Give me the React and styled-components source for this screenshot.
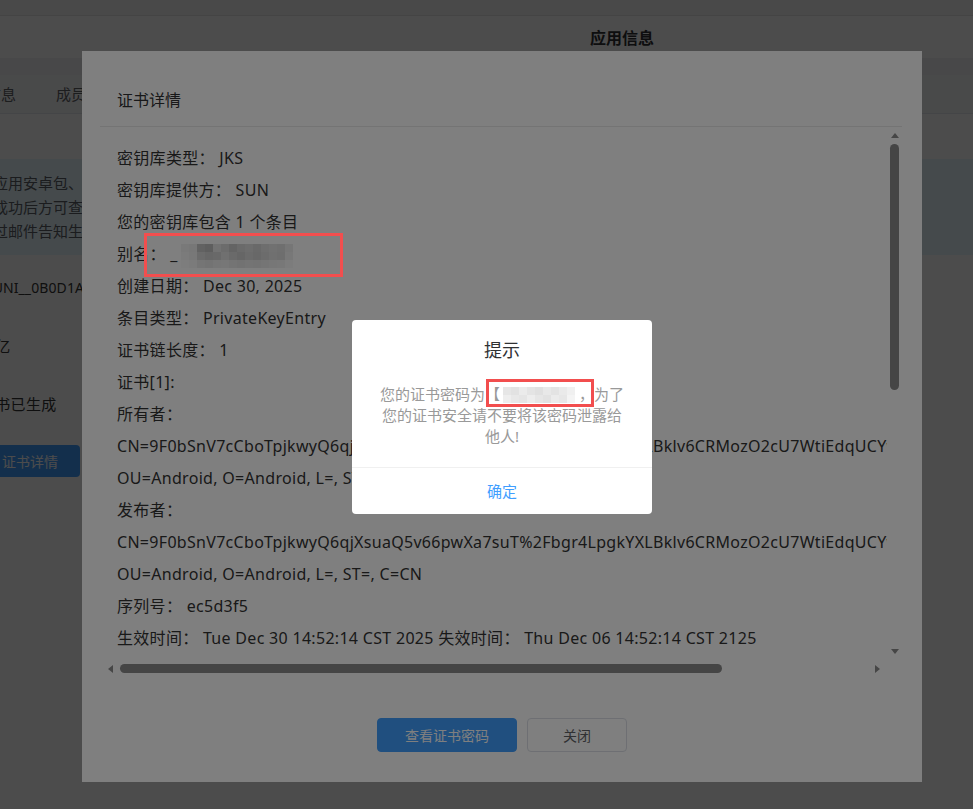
import React from 'react'
import styled, { createGlobalStyle, css } from 'styled-components'

const GlobalStyle = createGlobalStyle`
  html, body {
    margin: 0;
    padding: 0;
    height: 100%;
    overflow: hidden;
  }
  body {
    font-family: "Noto Sans", "Noto Sans CJK SC", sans-serif;
    background: #fff;
  }
  * {
    box-sizing: border-box;
  }
`;

/* ---------- page behind the dialogs (scrolled a little to the right) ---------- */

const Page = styled.div`
    margin-left: -200px;
    width: calc(100% + 200px);
    min-height: 100vh;
    background: #fff;
    color: #606266;
`;

const TopBar = styled.div`
    height: 16px;
    background: #f6f6f6;
    border-bottom: 1px solid #e3e3e3;
`;

const Header = styled.div`
    height: 42px;
    display: flex;
    align-items: center;
    padding-left: 790px;
    font-size: 16px;
    font-weight: bold;
    color: #303133;
`;

const Band = styled.div`
    height: 17px;
    background: #f1f2f4;
`;

const Tabs = styled.div`
    height: 39px;
    display: flex;
    padding-left: 136px;
    background: #f6f7f9;
    border-bottom: 1px solid #e4e7ed;
`;

const Tab = styled.div`
    padding: 0 20px;
    line-height: 38px;
    font-size: 15px;
    color: #606266;
`;

const InfoBox = styled.div`
    margin-top: 45px;
    padding: 12px 0 12px 193px;
    background: #e6f7ff;
    font-size: 15px;
    line-height: 24px;
    color: #5a6066;
    white-space: nowrap;
`;

const Form = styled.div`
    padding-top: 3px;
`;

const Row = styled.div`
    display: grid;
    grid-template-columns: 180px 1fr;
    align-items: center;
    height: 58px;
    font-size: 15px;
    color: #333;
`;

const Label = styled.div`
    text-align: right;
    padding-right: 12px;
    color: #606266;
`;

const Value = styled.div`
    white-space: nowrap;
    font-size: ${p => p.$size || 15}px;
    letter-spacing: ${p => p.$spacing ?? 0.3}px;
`;

const PageButton = styled.button`
    justify-self: start;
    height: 32px;
    padding: 0 22px;
    border: none;
    border-radius: 4px;
    background: #409eff;
    color: #fff;
    font-family: inherit;
    font-size: 14px;
`;

/* ---------- masks ---------- */

const Mask = styled.div`
    position: fixed;
    inset: 0;
    background: rgba(0, 0, 0, ${p => p.$alpha});
    z-index: ${p => p.$z};
`;

/* ---------- certificate dialog ---------- */

const DialogLayer = styled.div`
    position: fixed;
    inset: 0;
    z-index: 11;
    display: flex;
    padding: 51px 51px 27px 82px;
`;

const Dialog = styled.div`
    flex: 1;
    min-width: 0;
    min-height: 0;
    display: flex;
    flex-direction: column;
    background: #fff;
    color: #333;
`;

const DialogHeader = styled.div`
    margin: 0 20px 0 18px;
    padding: 37px 17px 14px;
    border-bottom: 1px solid #e8e8e8;
    font-size: 16px;
    line-height: 24px;
    color: #303133;
`;

const DialogBody = styled.div`
    flex: 1;
    min-height: 0;
    margin: 0 20px 0 18px;
    display: grid;
    grid-template-columns: 1fr 15px;
    grid-template-rows: 1fr 15px;
`;

const Viewport = styled.div`
    overflow: hidden;
    min-width: 0;
    min-height: 0;
`;

const Content = styled.div`
    padding: 15px 17px 22px;
    font-size: 16px;
    letter-spacing: 0.3px;
`;

const Line = styled.div`
    height: 32px;
    line-height: 32px;
    white-space: nowrap;
`;

/* scrollbars (drawn, the page itself is photographed without native ones) */

const ScrollBar = styled.div`
    display: flex;
    flex-direction: ${p => p.$vertical ? 'column' : 'row'};
    background: #fff;
`;

const ScrollButton = styled.div`
    flex: 0 0 15px;
    display: flex;
    ${p => p.$vertical ? css`
        justify-content: center;
        padding-top: ${p.$offset}px;
    ` : css`
        align-items: center;
        padding-left: ${p.$offset}px;
    `}
`;

const Arrow = styled.span`
    width: 0;
    height: 0;
    ${p => p.$dir === 'up' && css`
        border-left: 4.5px solid transparent;
        border-right: 4.5px solid transparent;
        border-bottom: 5px solid #8c8c8c;
    `}
    ${p => p.$dir === 'down' && css`
        border-left: 4.5px solid transparent;
        border-right: 4.5px solid transparent;
        border-top: 5px solid #8c8c8c;
    `}
    ${p => p.$dir === 'left' && css`
        border-top: 4.5px solid transparent;
        border-bottom: 4.5px solid transparent;
        border-right: 5px solid #8c8c8c;
    `}
    ${p => p.$dir === 'right' && css`
        border-top: 4.5px solid transparent;
        border-bottom: 4.5px solid transparent;
        border-left: 5px solid #8c8c8c;
    `}
`;

const Track = styled.div`
    flex: 1;
    display: flex;
    ${p => p.$vertical ? css`
        padding: 2px 3px 0;
    ` : css`
        padding: 3px 0 0 5px;
    `}
`;

const Thumb = styled.div`
    background: #8a8a8a;
    border-radius: 5px;
    ${p => p.$vertical ? css`
        width: 9px;
        height: ${p.$size}px;
    ` : css`
        height: 9px;
        width: ${p.$size}px;
    `}
`;

const Corner = styled.div`
    background: #fff;
`;

/* pixelated redaction blocks */
const Mosaic = styled.span`
    display: inline-grid;
    grid-template-columns: repeat(${p => p.$cols}, ${p => p.$cell}px);
    grid-auto-rows: ${p => p.$cell}px;
    vertical-align: middle;
    margin: ${p => p.$margin || '0'};
    filter: blur(0.6px);
`;

const Cell = styled.span`
    background: ${p => p.$c};
`;

const DialogFooter = styled.div`
    height: 106px;
    padding-top: 42px;
    display: flex;
    justify-content: center;
    gap: 10px;
`;

const FooterButton = styled.button`
    width: ${p => p.$w}px;
    height: 34px;
    border-radius: 4px;
    font-family: inherit;
    font-size: 14px;
    ${p => p.$primary ? css`
        background: #409eff;
        border: 1px solid #409eff;
        color: #fff;
    ` : css`
        background: #fff;
        border: 1px solid #dcdfe6;
        color: #606266;
    `}
`;

/* ---------- prompt box ---------- */

const AlertLayer = styled.div`
    position: fixed;
    inset: 0;
    z-index: 21;
    display: flex;
    align-items: center;
    justify-content: center;
    padding: 51px 51px 27px 82px;
`;

const Alert = styled.div`
    width: 300px;
    background: #fff;
    border-radius: 4px;
    text-align: center;
`;

const AlertTitle = styled.div`
    padding-top: 18px;
    font-size: 18px;
    line-height: 24px;
    color: #303133;
`;

const AlertMessage = styled.div`
    padding: 22px 25px 20px;
    font-size: 15px;
    line-height: 21px;
    color: #999;
`;

const Secret = styled.span`
    position: relative;

    &::after {
        content: '';
        position: absolute;
        left: 1px;
        right: 0;
        top: -5px;
        bottom: -3px;
        border: 3px solid #f24e4e;
    }
`;

const AlertFooter = styled.div`
    height: 47px;
    display: flex;
    align-items: center;
    justify-content: center;
    border-top: 1px solid #f0f0f0;
    font-size: 15px;
    color: #409eff;
`;

/* red frame drawn over the alias in the screenshot */
const Highlight = styled.div`
    position: fixed;
    left: 144px;
    top: 233px;
    width: 199px;
    height: 44px;
    border: 3px solid #f24e4e;
    z-index: 30;
    pointer-events: none;
`;

const CN = 'CN=9F0bSnV7cCboTpjkwyQ6qjXsuaQ5v66pwXa7suT%2Fbgr4LpgkYXLBklv6CRMozO2cU7WtiEdqUCYw%3D%3D';

const lines = [
    '密钥库类型： JKS',
    '密钥库提供方： SUN',
    '您的密钥库包含 1 个条目',
    'ALIAS',
    '创建日期： Dec 30, 2025',
    '条目类型： PrivateKeyEntry',
    '证书链长度： 1',
    '证书[1]:',
    '所有者：',
    CN,
    'OU=Android, O=Android, L=, ST=, C=CN',
    '发布者：',
    CN,
    'OU=Android, O=Android, L=, ST=, C=CN',
    '序列号： ec5d3f5',
    '生效时间： Tue Dec 30 14:52:14 CST 2025 失效时间： Thu Dec 06 14:52:14 CST 2125',
    '证书指纹：',
    'MD5: 5B:2E:91:0C:7A:44:D8:13:6F:A2:0E:9C:31:B7:58:E4',
    'SHA1: 8C:11:3F:A9:62:D0:7B:45:E2:9A:0C:56:1D:F8:34:B2:77:C5:09:AE',
    'SHA256: 4E:90:2A:C7:13:5B:F6:88:0D:A1:6E:3C:92:47:B5:D0:1F:E8:63:2B',
    '签名算法名称： SHA256withRSA',
    '主体公共密钥算法： 2048 位 RSA 密钥',
    '版本： 3',
];

// redaction shades, one row per string
const aliasBlocks = [
    '#f2f2f2 #eeeeee #c4c4c4 #bcbcbc #e4e4e4 #d8d8d8 #c8c8c8 #d4d4d4 #dadada #d2d2d2 #dcdcdc #e2e2e2 #dedede #ececec',
    '#f6f6f6 #f0f0f0 #d6d6d6 #cfcfcf #d2d2d2 #e0e0e0 #d4d4d4 #cccccc #d6d6d6 #d0d0d0 #d8d8d8 #e0e0e0 #dcdcdc #f0f0f0',
    '#fafafa #f6f6f6 #eaeaea #e6e6e6 #ececec #eeeeee #e8e8e8 #e4e4e4 #e8e8e8 #e6e6e6 #eaeaea #eeeeee #f0f0f0 #f8f8f8',
].map(r => r.split(' '));

const passwordBlocks = [
    '#e6e6e6 #e2e2e2 #ebebeb #e4e4e4 #e0e0e0 #e8e8e8 #e3e3e3 #eaeaea #f0f0f0',
    '#eeeeee #e8e8e8 #e5e5e5 #ededed #e6e6e6 #e2e2e2 #ebebeb #e7e7e7 #f4f4f4',
].map(r => r.split(' '));

const Redacted = ({ rows, cell, margin }) => (
    <Mosaic $cols={rows[0].length} $cell={cell} $margin={margin}>
        {rows.flat().map((c, i) => <Cell key={i} $c={c} />)}
    </Mosaic>
);

function App() {
    return (
        <>
            <GlobalStyle />
            <Page>
                <TopBar />
                <Header>应用信息</Header>
                <Band />
                <Tabs>
                    <Tab>基本信息</Tab>
                    <Tab>成员管理</Tab>
                    <Tab>安卓证书</Tab>
                </Tabs>
                <InfoBox>
                    <div>应用安卓包、苹果包打包时需要使用证书，请先生成证书</div>
                    <div>成功后方可查看证书详情及证书密码，证书信息请妥善保管</div>
                    <div>过邮件告知生成结果，如有问题请联系管理员</div>
                </InfoBox>
                <Form>
                    <Row>
                        <Label>AppID：</Label>
                        <Value $size={14} $spacing={0.1}>__UNI__0B0D1A5</Value>
                    </Row>
                    <Row>
                        <Label>申请人：</Label>
                        <Value>王亿</Value>
                    </Row>
                    <Row>
                        <Label>证书状态：</Label>
                        <Value>证书已生成</Value>
                    </Row>
                    <Row>
                        <Label>操作：</Label>
                        <PageButton>证书详情</PageButton>
                    </Row>
                </Form>
            </Page>

            <Mask $alpha={0.4} $z={10} />

            <DialogLayer>
                <Dialog>
                    <DialogHeader>证书详情</DialogHeader>
                    <DialogBody>
                        <Viewport>
                            <Content>
                                {lines.map((text, index) => (
                                    <Line key={index}>
                                        {text === 'ALIAS'
                                            ? <>别名： _<Redacted rows={aliasBlocks} cell={8} margin="0 0 0 3px" /></>
                                            : text}
                                    </Line>
                                ))}
                            </Content>
                        </Viewport>
                        <ScrollBar $vertical>
                            <ScrollButton $vertical $offset={6}><Arrow $dir="up" /></ScrollButton>
                            <Track $vertical><Thumb $vertical $size={246} /></Track>
                            <ScrollButton $vertical $offset={3}><Arrow $dir="down" /></ScrollButton>
                        </ScrollBar>
                        <ScrollBar>
                            <ScrollButton $offset={8}><Arrow $dir="left" /></ScrollButton>
                            <Track><Thumb $size={602} /></Track>
                            <ScrollButton $offset={3}><Arrow $dir="right" /></ScrollButton>
                        </ScrollBar>
                        <Corner />
                    </DialogBody>
                    <DialogFooter>
                        <FooterButton $primary $w={140}>查看证书密码</FooterButton>
                        <FooterButton $w={100}>关闭</FooterButton>
                    </DialogFooter>
                </Dialog>
            </DialogLayer>

            <Mask $alpha={0.5} $z={20} />

            <AlertLayer>
                <Alert>
                    <AlertTitle>提示</AlertTitle>
                    <AlertMessage>
                        您的证书密码为<Secret>【<Redacted rows={passwordBlocks} cell={8} margin="0 4px 0 3px" />，</Secret>为了您的证书安全请不要将该密码泄露给他人!
                    </AlertMessage>
                    <AlertFooter>确定</AlertFooter>
                </Alert>
            </AlertLayer>

            <Highlight />
        </>
    )
}

export default App
